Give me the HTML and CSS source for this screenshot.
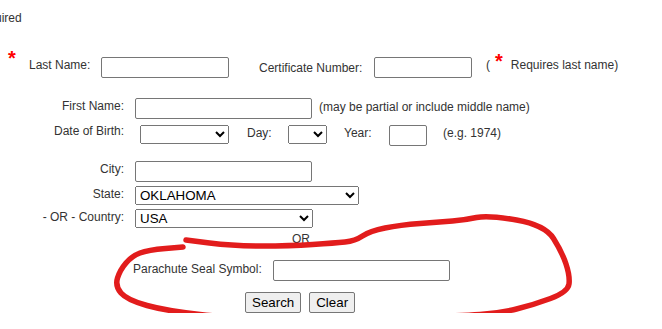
FILE: index.html
```html
<!DOCTYPE html>
<html lang="en">
<head>
  <meta charset="UTF-8">
  <meta name="viewport" content="width=device-width, initial-scale=1.0">
  <title>Rigger Search</title>
  <link rel="stylesheet" href="styles.css">
</head>
<body>
  <div class="required"><span class="star-inline">*</span> Required</div>

  <form class="search-form" onsubmit="return false;">
    <div class="row row-last">
      <span class="star star-lead">*</span>
      <label class="last-label" for="lastName">Last Name:</label>
      <input type="text" id="lastName" class="field field-last">
      <label class="cert-label" for="certNo">Certificate Number:</label>
      <input type="text" id="certNo" class="field field-cert">
      <span class="note-req">
        <span class="paren">(</span>
        <span class="star star-small">*</span>
        <span class="req-text">Requires last name)</span>
      </span>
    </div>

    <div class="row row-first">
      <label class="label" for="firstName">First Name:</label>
      <input type="text" id="firstName" class="field field-wide">
      <span class="hint hint-first">(may be partial or include middle name)</span>
    </div>

    <div class="row row-dob">
      <label class="label label-dob" for="month">Date of Birth:</label>
      <select id="month" class="pick pick-month"><option></option></select>
      <label class="day-label" for="day">Day:</label>
      <select id="day" class="pick pick-day"><option></option></select>
      <label class="year-label" for="year">Year:</label>
      <input type="text" id="year" class="field field-year">
      <span class="hint hint-year">(e.g. 1974)</span>
    </div>

    <div class="row row-city">
      <label class="label" for="city">City:</label>
      <input type="text" id="city" class="field field-wide">
    </div>

    <div class="row row-state">
      <label class="label" for="state">State:</label>
      <select id="state" class="pick pick-state"><option>OKLAHOMA</option></select>
    </div>

    <div class="row row-country">
      <label class="label" for="country">- OR - Country:</label>
      <select id="country" class="pick pick-country"><option>USA</option></select>
    </div>

    <div class="row row-or">
      <span class="or-text">OR</span>
    </div>

    <div class="row row-seal">
      <label class="seal-label" for="seal">Parachute Seal Symbol:</label>
      <input type="text" id="seal" class="field field-wide">
    </div>

    <div class="row row-buttons">
      <button type="submit" class="btn">Search</button>
      <button type="reset" class="btn">Clear</button>
    </div>
  </form>

  <!-- hand drawn marker circle around the seal search -->
  <svg class="scribble" width="662" height="329" viewBox="0 0 662 329">
    <path d="M186 240 L209.5 243 Q233 246 261.5 246 Q290 246 312.5 244.5 Q335 243 345 242 Q355 241 362.5 236 Q370 231 385 228 Q400 225 420 223.5 Q440 222 452.5 221 Q465 220 476.5 217.5 Q488 215 516.5 220 Q545 225 553.5 238.5 Q562 252 566 264 Q570 276 569 284 Q568 292 550.5 298.5 Q533 305 516.5 309 Q500 313 480 314.5 Q460 316 421.5 316.5 Q383 317 341.5 319 Q300 321 266.5 319.5 Q233 318 200 314.5 Q167 311 147 305.5 Q127 300 121 293 Q115 286 117.5 278 Q120 270 126 263 Q132 256 140 253 Q148 250 165.5 248.5 L183 247"/>
  </svg>
</body>
</html>
```

FILE: styles.css
```css
/* Basic Reset */
* {
  box-sizing: border-box;
}

body {
  margin: 0;
  position: relative;
  overflow: hidden;
  font-family: "Liberation Sans", Arial, sans-serif;
  font-size: 12px;
  line-height: 14px;
  color: #333;
  background: #fff;
}

.required {
  margin: 11px 0 0 -35px;
  white-space: nowrap;
}

.star-inline {
  color: #f00;
}

/* Form rows */
.row {
  display: flex;
  align-items: flex-start;
  white-space: nowrap;
}

.row-last { margin-top: 32px; height: 21px; }
.row-first { margin-top: 20px; height: 21px; }
.row-dob { margin-top: 6px; height: 21px; }
.row-city { margin-top: 15px; height: 21px; }
.row-state { margin-top: 4px; height: 19px; }
.row-country { margin-top: 4px; height: 19px; }
.row-or { margin-top: 4px; height: 14px; }
.row-seal { margin-top: 14px; height: 21px; }
.row-buttons { margin-top: 11px; height: 21px; gap: 8px; padding-left: 245px; }

.star {
  color: #f00;
  font-size: 20px;
  font-weight: bold;
  line-height: 20px;
}

.star-lead {
  width: 29px;
  padding-left: 8px;
  margin-top: -9px;
}

.last-label {
  width: 72px;
  margin-top: 1px;
}

.cert-label {
  width: 115px;
  margin-left: 30px;
  margin-top: 4px;
}

.note-req {
  display: flex;
  margin-left: 14px;
  margin-top: 1px;
}

.star-small {
  margin-left: 5px;
  margin-top: -7px;
}

.req-text {
  margin-left: 8px;
}

.label {
  width: 124px;
  margin-right: 11px;
  margin-top: 1px;
  text-align: right;
}

.label-dob {
  margin-right: 16px;
  margin-top: -1px;
}

.hint-first {
  margin-left: 7px;
  margin-top: 2px;
}

.day-label {
  width: 41px;
  margin-left: 18px;
  margin-top: 1px;
}

.year-label {
  width: 45px;
  margin-left: 17px;
  margin-top: 1px;
}

.hint-year {
  margin-left: 16px;
  margin-top: 1px;
}

.or-text {
  margin-left: 292px;
}

.seal-label {
  width: 140px;
  margin-left: 133px;
  margin-top: 2px;
}

/* Controls */
.field {
  height: 21px;
  padding: 1px 2px;
  border: 1px solid #767676;
  border-radius: 2px;
  font-family: "Liberation Sans", Arial, sans-serif;
  font-size: 13.33px;
  background: #fff;
}

.field-last { width: 128px; }
.field-cert { width: 98px; }
.field-wide { width: 177px; }
.field-year { width: 38px; }

.pick {
  height: 19px;
  font-family: "Liberation Sans", Arial, sans-serif;
  font-size: 13.33px;
  color: #000;
}

.pick-month { width: 89px; }
.pick-day { width: 39px; }
.pick-state { width: 224px; }
.pick-country { width: 178px; }

.btn {
  height: 21px;
  padding: 1px 6px;
  border: 1px solid #767676;
  border-radius: 2px;
  background: #efefef;
  color: #000;
  font-family: "Liberation Sans", Arial, sans-serif;
  font-size: 13.33px;
}

/* Marker overlay */
.scribble {
  position: absolute;
  top: 0;
  left: 0;
  pointer-events: none;
}

.scribble path {
  fill: none;
  stroke: #e21c1c;
  stroke-width: 5.5;
  stroke-linecap: round;
  stroke-linejoin: round;
}
```
